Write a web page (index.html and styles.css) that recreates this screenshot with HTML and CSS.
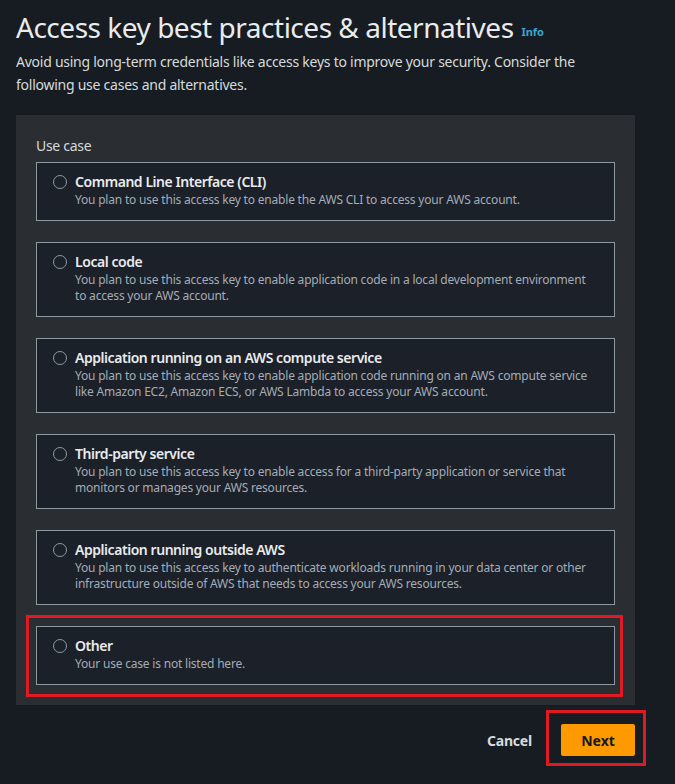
FILE: index.html
```html
<!DOCTYPE html>
<html lang="en">
<head>
<meta charset="utf-8">
<title>Access key best practices &amp; alternatives</title>
<link rel="stylesheet" href="styles.css">
</head>
<body>
<main class="page">
  <header class="head">
    <h1 class="title">Access key best practices &amp; alternatives <a class="info" href="#">Info</a></h1>
    <p class="lead">Avoid using long-term credentials like access keys to improve your security. Consider the following use cases and alternatives.</p>
  </header>

  <section class="panel">
    <div class="label">Use case</div>
    <div class="options">
      <label class="opt">
        <span class="radio"></span>
        <span class="opt-body">
          <span class="opt-title">Command Line Interface (CLI)</span>
          <span class="opt-desc">You plan to use this access key to enable the AWS CLI to access your AWS account.</span>
        </span>
      </label>
      <label class="opt">
        <span class="radio"></span>
        <span class="opt-body">
          <span class="opt-title">Local code</span>
          <span class="opt-desc">You plan to use this access key to enable application code in a local development environment to access your AWS account.</span>
        </span>
      </label>
      <label class="opt">
        <span class="radio"></span>
        <span class="opt-body">
          <span class="opt-title">Application running on an AWS compute service</span>
          <span class="opt-desc">You plan to use this access key to enable application code running on an AWS compute service like Amazon EC2, Amazon ECS, or AWS Lambda to access your AWS account.</span>
        </span>
      </label>
      <label class="opt">
        <span class="radio"></span>
        <span class="opt-body">
          <span class="opt-title">Third-party service</span>
          <span class="opt-desc">You plan to use this access key to enable access for a third-party application or service that monitors or manages your AWS resources.</span>
        </span>
      </label>
      <label class="opt">
        <span class="radio"></span>
        <span class="opt-body">
          <span class="opt-title">Application running outside AWS</span>
          <span class="opt-desc">You plan to use this access key to authenticate workloads running in your data center or other infrastructure outside of AWS that needs to access your AWS resources.</span>
        </span>
      </label>
      <label class="opt marked">
        <span class="radio"></span>
        <span class="opt-body">
          <span class="opt-title">Other</span>
          <span class="opt-desc">Your use case is not listed here.</span>
        </span>
      </label>
    </div>
  </section>

  <footer class="actions">
    <button class="btn-link" type="button">Cancel</button>
    <button class="btn-primary marked-btn" type="button">Next</button>
  </footer>
</main>
</body>
</html>
```

FILE: styles.css
```css
* { box-sizing: border-box; }

html, body {
  margin: 0;
  padding: 0;
  background: #171b22;
}

body {
  font-family: "Noto Sans", "Open Sans", Arial, sans-serif;
  color: #d1d5db;
  width: 675px;
  height: 784px;
  overflow: hidden;
}

.page {
  width: 619px;
  margin-left: 16px;
}

.head {
  padding-top: 8px;
}

.title {
  margin: 0;
  font-size: 28px;
  font-weight: 400;
  line-height: 38px;
  color: #e9ebed;
  letter-spacing: -0.48px;
}

.info {
  font-size: 11px;
  font-weight: 700;
  color: #39a5d0;
  text-decoration: none;
  margin-left: 1px;
  vertical-align: 2px;
  letter-spacing: 0;
}

.lead {
  margin: -1px 0 0;
  font-size: 14px;
  line-height: 23px;
  color: #d5dbdb;
  max-width: 600px;
  letter-spacing: -0.25px;
}

.panel {
  margin-top: 19px;
  background: #2a2d32;
  padding: 20px 20px 20px;
}

.label {
  font-size: 14px;
  line-height: 22px;
  color: #d5dbdb;
  margin-bottom: 5px;
  letter-spacing: -0.3px;
}

.options {
  display: flex;
  flex-direction: column;
  gap: 21px;
}

.opt {
  position: relative;
  display: flex;
  align-items: flex-start;
  gap: 8px;
  background: #1b2029;
  border: 1px solid #8d9ba0;
  padding: 9px 18px 12px 16px;
}

.radio {
  flex: none;
  width: 14px;
  height: 14px;
  border: 1.5px solid #8d9ba0;
  border-radius: 50%;
  margin-top: 3px;
}

.opt-body {
  display: flex;
  flex-direction: column;
}

.opt-title {
  font-size: 14px;
  line-height: 20px;
  font-weight: 600;
  color: #e9ebed;
  letter-spacing: -0.45px;
}

.opt-desc {
  font-size: 12px;
  line-height: 16px;
  color: #a4adb6;
  letter-spacing: -0.2px;
}

.marked::after {
  content: "";
  position: absolute;
  top: -12px;
  left: -11px;
  right: -9px;
  bottom: -13px;
  border: 3px solid #e01a22;
  pointer-events: none;
}

.actions {
  display: flex;
  justify-content: flex-end;
  align-items: center;
  gap: 29px;
  margin-top: 19px;
}

.btn-link {
  background: none;
  border: none;
  padding: 0;
  font-family: inherit;
  font-size: 14px;
  font-weight: 700;
  color: #d5dbdb;
  letter-spacing: -0.2px;
}

.btn-primary {
  position: relative;
  width: 74px;
  height: 32px;
  background: #ff9900;
  border: none;
  border-radius: 2px;
  font-family: inherit;
  font-size: 14px;
  font-weight: 700;
  color: #16191f;
  padding: 0;
}

.marked-btn::after {
  content: "";
  position: absolute;
  top: -14px;
  left: -15px;
  right: -11px;
  bottom: -10px;
  border: 3px solid #e01a22;
  pointer-events: none;
}
```
